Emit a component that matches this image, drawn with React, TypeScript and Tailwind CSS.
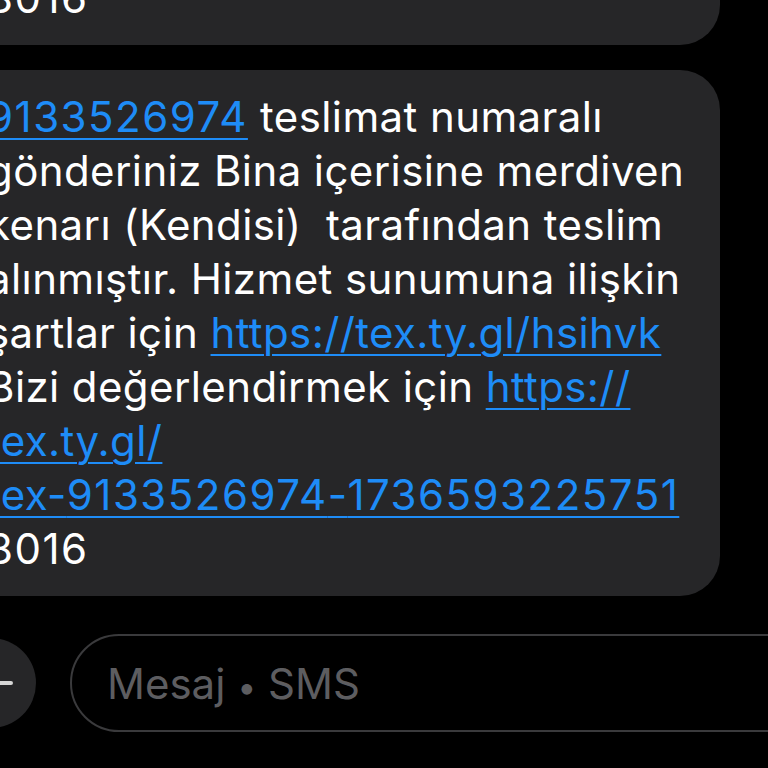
import React from 'react'

const Link = ({ children }: { children: React.ReactNode }) => (
  <span className="text-[#1e8cf7] underline decoration-2 underline-offset-[6px]">{children}</span>
)

// SF digits run wider than Inter's, so numbers get a little extra tracking
const Num = ({ children }: { children: React.ReactNode }) => (
  <span className="tracking-[1.5px]">{children}</span>
)

const Bubble = ({ className, children }: { className?: string, children: React.ReactNode }) => (
  <div className={`-ml-[50px] w-[770px] rounded-[40px] bg-[#262628] py-[20px] pl-[37px] pr-[30px] text-[42px] leading-[54px] tracking-[0.4px] text-white ${className || ''}`}>
    {children}
  </div>
)

export default function App() {
  return (
    <div className="h-[768px] w-[768px] overflow-hidden bg-black font-[Inter,sans-serif] antialiased">
      <div className="flex flex-col gap-[25px]">
        <Bubble className="-mt-[49px]">
          <div className="whitespace-pre"><Num>8016</Num></div>
        </Bubble>
        <Bubble>
          <div className="whitespace-pre"><Link><Num>9133526974</Num></Link> teslimat numaralı</div>
          <div className="whitespace-pre">gönderiniz Bina içerisine merdiven</div>
          <div className="whitespace-pre">kenarı (Kendisi)  tarafından teslim</div>
          <div className="whitespace-pre">alınmıştır. Hizmet sunumuna ilişkin</div>
          <div className="whitespace-pre">şartlar için <Link>https://tex.ty.gl/hsihvk</Link></div>
          <div className="whitespace-pre">Bizi değerlendirmek için <Link>https://</Link></div>
          <div className="whitespace-pre"><Link>tex.ty.gl/</Link></div>
          <div className="whitespace-pre"><Link>tex-<Num>9133526974</Num>-<Num>1736593225751</Num></Link></div>
          <div className="whitespace-pre"><Num>8016</Num></div>
        </Bubble>
      </div>

      <div className="-ml-[54px] mt-[38px] flex items-center gap-[34px]">
        <div className="flex h-[90px] w-[90px] shrink-0 items-center justify-center rounded-full bg-[#262628]">
          <svg width="44" height="44" viewBox="0 0 44 44" fill="none" stroke="#d6d6d6" strokeWidth="4" strokeLinecap="round">
            <path d="M22 2v40M2 22h40" />
          </svg>
        </div>
        <div className="flex h-[98px] w-[760px] shrink-0 items-center rounded-full border-2 border-[#3a3a3c] pl-[35px]">
          <span className="whitespace-pre text-[42px] text-[#5d5d60]">Mesaj <span className="text-[34px]">•</span> SMS</span>
        </div>
      </div>
    </div>
  )
}
